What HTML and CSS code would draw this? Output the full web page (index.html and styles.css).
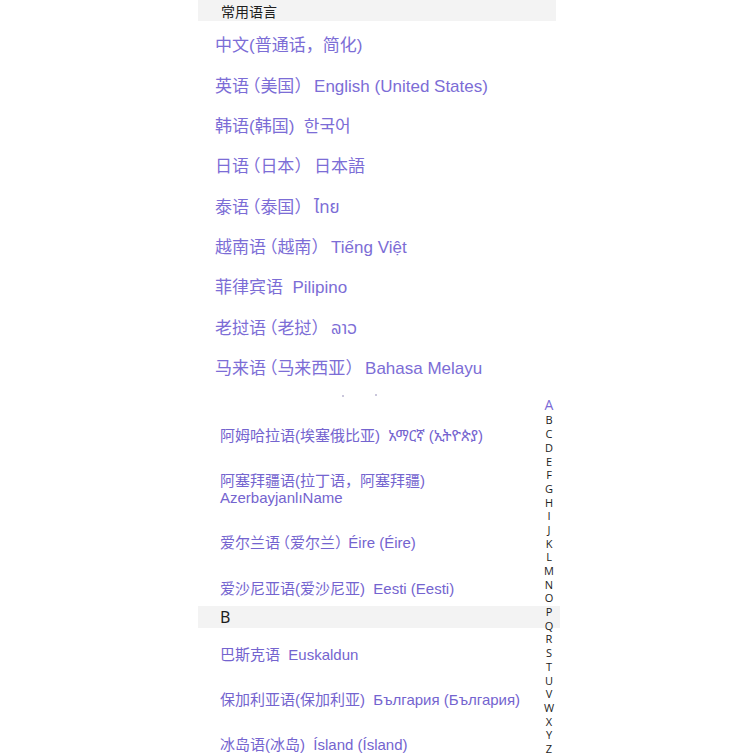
FILE: index.html
```html
<!DOCTYPE html>
<html lang="zh-CN">
<head>
<meta charset="utf-8">
<title>语言</title>
<link rel="stylesheet" href="styles.css">
</head>
<body>
<div class="page">
  <section class="common">
    <div class="band band-top">常用语言</div>
    <ul class="list list-big">
      <li>中文(普通话，简化)</li>
      <li>英语<span class="lp">（</span>美国<span class="rp">）</span> English (United States)</li>
      <li>韩语(韩国)&nbsp; 한국어</li>
      <li>日语<span class="lp">（</span>日本<span class="rp">）</span> 日本語</li>
      <li>泰语<span class="lp">（</span>泰国<span class="rp">）</span> ไทย</li>
      <li>越南语<span class="lp">（</span>越南<span class="rp">）</span> Tiếng Việt</li>
      <li>菲律宾语&nbsp; Pilipino</li>
      <li>老挝语<span class="lp">（</span>老挝<span class="rp">）</span> ລາວ</li>
      <li>马来语<span class="lp">（</span>马来西亚<span class="rp">）</span> Bahasa Melayu</li>
    </ul>
  </section>
  <div class="cut"><span class="dot d1"></span><span class="dot d2"></span></div>
  <section class="all">
    <ul class="list list-small">
      <li>阿姆哈拉语(埃塞俄比亚)&nbsp; አማርኛ (ኢትዮጵያ)</li>
      <li class="two">阿塞拜疆语(拉丁语，阿塞拜疆)<br>AzerbayjanlıName</li>
      <li>爱尔兰语<span class="lp">（</span>爱尔兰<span class="rp">）</span>Éire (Éire)</li>
      <li class="last">爱沙尼亚语(爱沙尼亚)&nbsp; Eesti (Eesti)</li>
    </ul>
    <div class="band band-letter">B</div>
    <ul class="list list-small list-b">
      <li>巴斯克语&nbsp; Euskaldun</li>
      <li>保加利亚语(保加利亚)&nbsp; България (България)</li>
      <li>冰岛语(冰岛)&nbsp; Ísland (Ísland)</li>
    </ul>
    <nav class="index">
      <span class="active">A</span><span>B</span><span>C</span><span>D</span><span>E</span><span>F</span><span>G</span><span>H</span><span>I</span><span>J</span><span>K</span><span>L</span><span>M</span><span>N</span><span>O</span><span>P</span><span>Q</span><span>R</span><span>S</span><span>T</span><span>U</span><span>V</span><span>W</span><span>X</span><span>Y</span><span>Z</span>
    </nav>
  </section>
</div>
</body>
</html>
```
FILE: styles.css
```css
html, body {
  margin: 0;
  padding: 0;
  background: #ffffff;
  overflow: hidden;
  height: 756px;
}

body {
  font-family: "Liberation Sans", "Noto Sans", "Noto Sans Thai", "Noto Sans Lao", "Noto Sans Ethiopic", "DejaVu Sans", "Noto Sans CJK SC", sans-serif;
}

.page {
  margin-left: 198px;
  width: 362px;
}

.band {
  background: #f3f3f3;
  color: #1e1e1e;
  font-family: "Noto Sans", "Noto Sans CJK SC", sans-serif;
}

.band-top {
  margin-right: 4px;
  height: 21px;
  line-height: 23px;
  font-size: 14px;
  padding-left: 23px;
}

.band-letter {
  height: 22px;
  line-height: 22px;
  font-size: 16px;
  padding-left: 22px;
}

.list {
  list-style: none;
  margin: 0;
  padding: 0;
}

.list-big {
  padding-top: 5px;
}

.list-big li {
  font-size: 17px;
  line-height: 20px;
  padding: 10.2px 0 10.2px 17px;
  color: #7c6dd6;
  white-space: nowrap;
}

.lp,
.rp {
  font-feature-settings: "halt" 1;
}

.lp {
  padding-left: 0.17em;
}

.rp {
  padding-right: 0.38em;
}

.cut {
  position: relative;
  height: 10.4px;
}

.dot {
  position: absolute;
  width: 2px;
  height: 2px;
  border-radius: 1px;
  background: #b8b4d0;
  top: 6px;
}

.d1 { left: 144px; }
.d2 { left: 177px; top: 5px; }

.all {
  position: relative;
  padding-top: 14px;
}

.list-small li {
  font-size: 15px;
  line-height: 20px;
  padding: 12px 0 13px 22px;
  color: #7464cf;
  white-space: nowrap;
}

.list-small li.two {
  line-height: 17px;
  padding: 13px 0 15px 22px;
}

.list-small li.last {
  padding-top: 13px;
  padding-bottom: 7px;
}

.list-b {
  padding-top: 5px;
}

.index {
  position: absolute;
  top: 0;
  left: 343px;
  width: 16px;
  display: flex;
  flex-direction: column;
  align-items: center;
  font-family: "Open Sans", "Noto Sans", sans-serif;
  font-size: 11px;
  line-height: 13.7px;
  color: #222222;
}

.index span {
  display: block;
  height: 13.7px;
}

.index .active {
  font-size: 14px;
  line-height: 12px;
  height: 12px;
  margin-top: -1px;
  margin-bottom: 2.7px;
  color: #7b6bd6;
}
```
